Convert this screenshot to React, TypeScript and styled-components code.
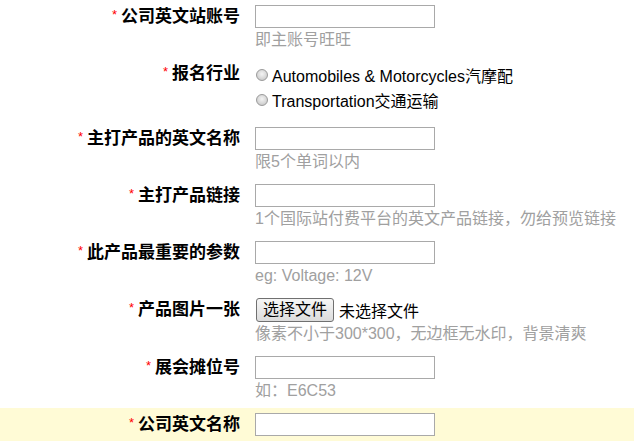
import React from "react";
import styled, { createGlobalStyle } from "styled-components";

const Global = createGlobalStyle`
  html, body { margin: 0; padding: 0; background: #fff; }
  body { font-family: "Liberation Sans", "Noto Sans CJK SC", sans-serif; color: #000; }
`;

const Form = styled.div`
  display: flex;
  flex-direction: column;
  width: 634px;
`;

const Row = styled.div<{ $highlight?: boolean }>`
  display: grid;
  grid-template-columns: 240px 1fr;
  column-gap: 15px;
  padding: 5px 0;
  background: ${(p) => (p.$highlight ? "#fffbd6" : "transparent")};
`;

const Label = styled.div`
  text-align: right;
  font-family: "Noto Sans CJK SC", sans-serif;
  font-weight: 700;
  font-size: 17px;
  line-height: 20px;
  white-space: nowrap;
`;

const Star = styled.span`
  color: #f00;
  font-family: "Liberation Sans", sans-serif;
  font-weight: 400;
  font-size: 13px;
  margin-right: 4px;
  vertical-align: 3px;
`;

const Field = styled.div`
  display: flex;
  flex-direction: column;
  align-items: flex-start;
`;

const TextInput = styled.input`
  box-sizing: border-box;
  width: 180px;
  height: 23px;
  margin: 0;
  border: 1px solid #a9a9a9;
  background: #fff;
  padding: 0 3px;
  outline: none;
`;

const Hint = styled.div`
  font-size: 16px;
  line-height: 24px;
  color: #a0a0a0;
  white-space: nowrap;
`;

const RadioGroup = styled.div`
  display: flex;
  flex-direction: column;
  padding-bottom: 5px;
`;

const RadioItem = styled.label`
  display: flex;
  align-items: center;
  height: 25px;
  font-size: 16px;
  white-space: nowrap;
`;

const Radio = styled.input.attrs({ type: "radio" })`
  appearance: none;
  box-sizing: border-box;
  width: 12px;
  height: 12px;
  margin: 0 4px 0 1px;
  border-radius: 50%;
  border: 1px solid #9a9a9a;
  background: radial-gradient(circle at 50% 40%, #f4f4f4 0%, #d8d8d8 55%, #bdbdbd 100%);
`;

const FileLine = styled.div`
  display: flex;
  align-items: center;
  height: 24px;
  font-size: 16px;
`;

const FileButton = styled.button`
  box-sizing: border-box;
  height: 24px;
  width: 78px;
  margin: 0 5px 0 1px;
  padding: 0;
  border: 1px solid #707070;
  border-radius: 3px;
  background: linear-gradient(#f6f6f6, #dcdcdc);
  font-family: "Liberation Sans", "Noto Sans CJK SC", sans-serif;
  font-size: 16px;
  color: #000;
  line-height: 20px;
`;

type Item = {
  label: string;
  hint?: string;
  kind?: "text" | "radio" | "file";
  highlight?: boolean;
};

const items: Item[] = [
  { label: "公司英文站账号", hint: "即主账号旺旺" },
  { label: "报名行业", kind: "radio" },
  { label: "主打产品的英文名称", hint: "限5个单词以内" },
  { label: "主打产品链接", hint: "1个国际站付费平台的英文产品链接，勿给预览链接" },
  { label: "此产品最重要的参数", hint: "eg: Voltage: 12V" },
  { label: "产品图片一张", hint: "像素不小于300*300，无边框无水印，背景清爽", kind: "file" },
  { label: "展会摊位号", hint: "如：E6C53" },
  { label: "公司英文名称", highlight: true },
];

const industries = ["Automobiles & Motorcycles汽摩配", "Transportation交通运输"];

export default function App() {
  return (
    <>
      <Global />
      <Form>
        {items.map((it) => (
          <Row key={it.label} $highlight={it.highlight}>
            <Label>
              <Star>*</Star>
              {it.label}
            </Label>
            <Field>
              {it.kind === "radio" ? (
                <RadioGroup>
                  {industries.map((ind) => (
                    <RadioItem key={ind}>
                      <Radio name="industry" />
                      {ind}
                    </RadioItem>
                  ))}
                </RadioGroup>
              ) : it.kind === "file" ? (
                <FileLine>
                  <FileButton>选择文件</FileButton>
                  未选择文件
                </FileLine>
              ) : (
                <TextInput type="text" />
              )}
              {it.hint && <Hint>{it.hint}</Hint>}
            </Field>
          </Row>
        ))}
      </Form>
    </>
  );
}
